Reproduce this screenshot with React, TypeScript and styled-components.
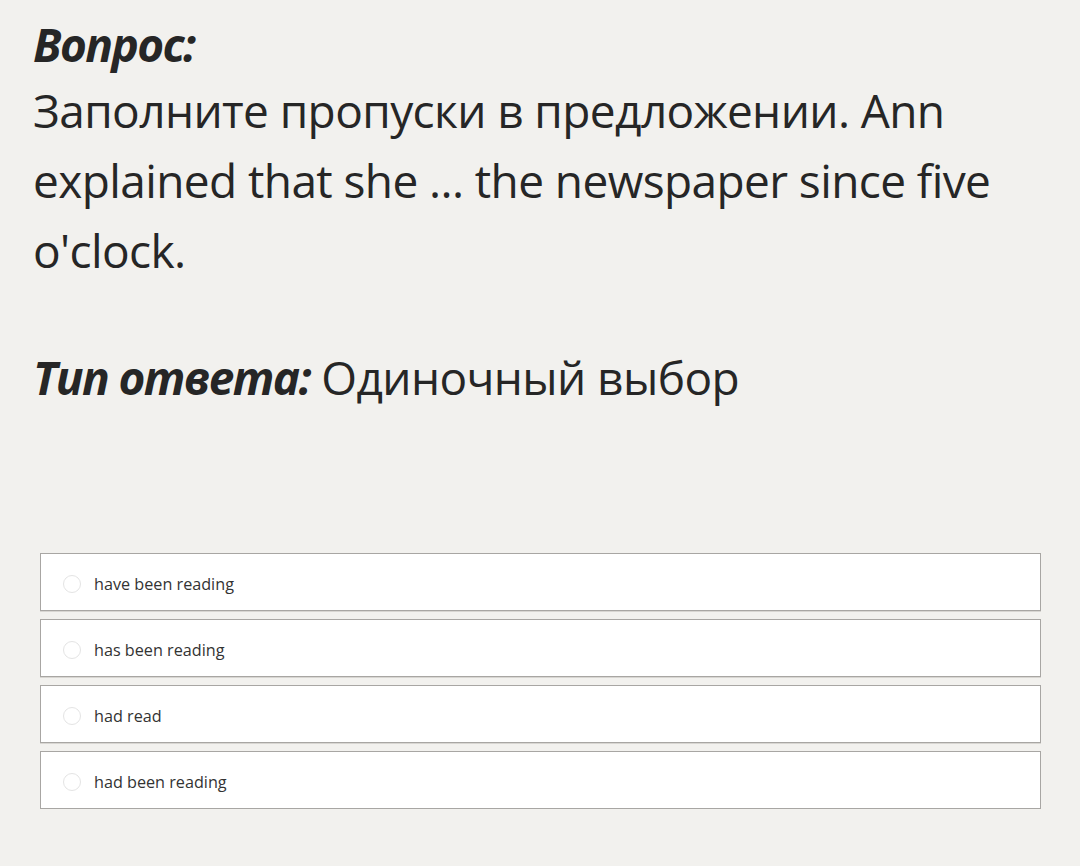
import React from "react";
import styled, { createGlobalStyle } from "styled-components";

const Global = createGlobalStyle`
  html, body { margin: 0; padding: 0; background: #f2f1ee; }
  body { font-family: "Open Sans", "Noto Sans", sans-serif; color: #262626; }
`;

const Page = styled.div`
  padding: 14px 39px 0 33px;
`;

const Label = styled.span`
  font-weight: 700;
  font-style: italic;
  letter-spacing: -1.6px;
`;

const Heading = styled.div`
  font-size: 46px;
  line-height: 61px;
`;

const Block = styled.div`
  font-size: 46px;
  line-height: 70px;
  letter-spacing: -0.6px;
`;

const TypeLine = styled.div`
  margin-top: 57px;
  font-size: 46px;
  line-height: 70px;
  letter-spacing: -0.6px;
`;

const Options = styled.div`
  margin: 141px 0 0 7px;
  display: flex;
  flex-direction: column;
  gap: 8px;
`;

const Option = styled.label`
  display: flex;
  align-items: center;
  box-sizing: border-box;
  height: 58px;
  padding: 3px 0 0 22px;
  background: #fff;
  border: 1px solid #a8a6a3;
  box-shadow: 0 1px 0 #d8d6d2;
  font-size: 16.2px;
  color: #333;
  cursor: pointer;
`;

const Radio = styled.span`
  width: 16px;
  height: 16px;
  border-radius: 50%;
  border: 1px solid #e4e4e4;
  margin-right: 13px;
  flex: none;
`;

const answers = ["have been reading", "has been reading", "had read", "had been reading"];

export default function App() {
  return (
    <>
      <Global />
      <Page>
        <Heading>
          <Label>Вопрос:</Label>
        </Heading>
        <Block>
          Заполните пропуски в предложении. Ann explained that she ... the newspaper since five o'clock.
        </Block>
        <TypeLine>
          <Label>Тип ответа:</Label> Одиночный выбор
        </TypeLine>
        <Options>
          {answers.map((a) => (
            <Option key={a}>
              <Radio />
              {a}
            </Option>
          ))}
        </Options>
      </Page>
    </>
  );
}
